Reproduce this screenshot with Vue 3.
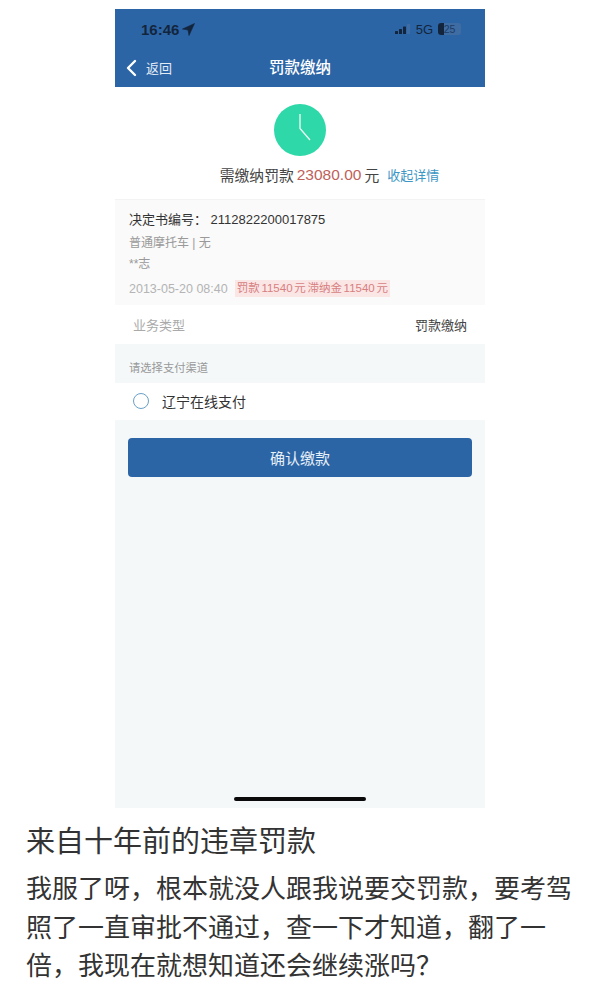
<template>
  <div class="page">
    <div class="phone">
      <div class="topbar">
        <div class="status">
          <div class="time">
            16:46
            <svg class="loc" width="13" height="13" viewBox="0 0 13 13"><path d="M12.5 0.5 L0.5 6 L6 7 L7 12.5 Z" fill="#13253d" stroke="#13253d" stroke-width="0.6" stroke-linejoin="round" /></svg>
          </div>
          <div class="status-right">
            <svg width="16" height="10" viewBox="0 0 16 10">
              <rect x="0" y="7" width="3" height="3" rx="0.5" fill="#13253d" />
              <rect x="4" y="5" width="3" height="5" rx="0.5" fill="#13253d" />
              <rect x="8" y="2.5" width="3" height="7.5" rx="0.5" fill="#13253d" />
              <rect x="12" y="0" width="3" height="10" rx="0.5" fill="#3f6ca3" />
            </svg>
            <span class="net">5G</span>
            <div class="battery"><span class="battery-fill"></span><span class="battery-num">25</span></div>
          </div>
        </div>
        <div class="nav">
          <div class="back">
            <svg width="12" height="18" viewBox="0 0 12 18"><path d="M10 2 L3 9 L10 16" fill="none" stroke="#fff" stroke-width="2.4" stroke-linecap="round" stroke-linejoin="round" /></svg>
            <span>返回</span>
          </div>
          <div class="nav-title">罚款缴纳</div>
        </div>
      </div>

      <div class="hero">
        <svg width="52" height="52" viewBox="0 0 52 52">
          <circle cx="26" cy="26" r="26" fill="#2ed8a8" />
          <path d="M26 10 V24.5 L36 36" fill="none" stroke="#e8f7f2" stroke-width="1.4" />
        </svg>
        <div class="due">
          <span>需缴纳罚款</span>
          <span class="amount">23080.00</span>
          <span>元</span>
          <span class="toggle">收起详情</span>
        </div>
      </div>

      <div class="detail">
        <div class="doc-no">决定书编号： 2112822200017875</div>
        <div class="muted first">普通摩托车 | 无</div>
        <div class="muted">**志</div>
        <div class="meta">
          <span class="date">2013-05-20 08:40</span>
          <span class="fee">罚款 11540 元 滞纳金 11540 元</span>
        </div>
      </div>

      <div class="type-row">
        <span class="type-label">业务类型</span>
        <span class="type-value">罚款缴纳</span>
      </div>

      <div class="pay-label">请选择支付渠道</div>
      <div class="pay-option">
        <span class="radio"></span>
        <span>辽宁在线支付</span>
      </div>

      <div class="footer">
        <div class="confirm">确认缴款</div>
        <div class="home-bar"></div>
      </div>
    </div>

    <div class="post">
      <h1 class="post-title">来自十年前的违章罚款</h1>
      <p class="post-body">我服了呀，根本就没人跟我说要交罚款，要考驾照了一直审批不通过，查一下才知道，翻了一倍，我现在就想知道还会继续涨吗？</p>
    </div>
  </div>
</template>

<script setup>
</script>

<style>
body {
  background: #fff;
}
</style>

<style scoped>
.page {
  width: 600px;
  height: 1001px;
  overflow: hidden;
  padding-top: 9px;
  box-sizing: border-box;
  background: #fff;
  font-family: "Liberation Sans", "Noto Sans CJK SC", sans-serif;
}

.phone {
  width: 370px;
  height: 799px;
  margin: 0 auto;
  display: flex;
  flex-direction: column;
  background: #f4f8f9;
}

.topbar {
  height: 78px;
  background: #2c65a6;
}

.status {
  height: 40px;
  display: flex;
  justify-content: space-between;
  align-items: center;
  padding: 0 24px 0 26px;
}

.time {
  display: flex;
  align-items: center;
  gap: 3px;
  font-size: 15px;
  font-weight: 700;
  color: #13253d;
}

.status-right {
  display: flex;
  align-items: center;
  gap: 5px;
}

.net {
  font-size: 13px;
  color: #13253d;
}

.battery {
  position: relative;
  width: 23px;
  height: 12px;
  border-radius: 3px;
  overflow: hidden;
  background: #3f6ca3;
}

.battery-fill {
  position: absolute;
  left: 0;
  top: 0;
  width: 6px;
  height: 12px;
  background: #13253d;
}

.battery-num {
  position: absolute;
  left: 0;
  right: 0;
  top: 0;
  text-align: center;
  font-size: 10.5px;
  line-height: 12px;
  color: #1c3c66;
}

.nav {
  position: relative;
  height: 38px;
  display: flex;
  align-items: center;
  justify-content: center;
  padding-bottom: 4px;
  box-sizing: border-box;
}

.back {
  position: absolute;
  left: 10px;
  top: 9px;
  display: flex;
  align-items: center;
  gap: 9px;
  font-size: 13px;
  color: #e2ebf5;
}

.nav-title {
  font-size: 15.5px;
  font-weight: 500;
  color: #fff;
}

.hero {
  height: 112px;
  background: #fff;
  display: flex;
  flex-direction: column;
  align-items: center;
  padding-top: 17px;
  box-sizing: border-box;
}

.due {
  display: flex;
  align-items: center;
  gap: 3px;
  margin-top: 8px;
  margin-left: 59px;
  font-size: 14.8px;
  color: #444;
}

.amount {
  font-size: 15.5px;
  color: #c0605a;
}

.toggle {
  margin-left: 5px;
  font-size: 13px;
  color: #3d96c4;
}

.detail {
  height: 106px;
  background: #fafafa;
  padding: 11px 14px 0;
  box-sizing: border-box;
  border-top: 1px solid #f3f3f3;
}

.doc-no {
  font-size: 13px;
  line-height: 18px;
  color: #333;
}

.muted {
  margin-top: 4px;
  font-size: 12px;
  line-height: 17px;
  color: #999;
}

.muted.first {
  margin-top: 6px;
}

.meta {
  display: flex;
  align-items: center;
  gap: 7px;
  margin-top: 7px;
  font-size: 12.5px;
  color: #b4b4b4;
}

.fee {
  padding: 0 2px;
  background: #fbe6e6;
  color: #d77f7f;
  font-size: 11.5px;
  line-height: 17px;
  word-spacing: -1.5px;
}

.type-row {
  height: 39px;
  background: #fff;
  display: flex;
  justify-content: space-between;
  align-items: center;
  padding: 0 18px;
  font-size: 13px;
}

.type-label {
  color: #aaa;
}

.type-value {
  color: #444;
}

.pay-label {
  height: 39px;
  padding: 16px 14px 0;
  box-sizing: border-box;
  font-size: 11.3px;
  line-height: 16px;
  color: #999;
}

.pay-option {
  height: 37px;
  background: #fff;
  display: flex;
  align-items: center;
  gap: 13px;
  padding: 0 0 2px 18px;
  box-sizing: border-box;
  font-size: 14px;
  color: #333;
}

.radio {
  width: 14px;
  height: 14px;
  border: 1.5px solid #6aa0c8;
  border-radius: 50%;
}

.footer {
  flex: 1;
  display: flex;
  flex-direction: column;
  align-items: center;
  padding: 18px 13px 0;
}

.confirm {
  width: 100%;
  height: 39px;
  border-radius: 4px;
  background: #2c65a6;
  color: #e8f0f8;
  font-size: 15px;
  padding-bottom: 1px;
  box-sizing: border-box;
  display: flex;
  align-items: center;
  justify-content: center;
}

.home-bar {
  width: 132px;
  height: 4px;
  margin-top: 320px;
  border-radius: 2px;
  background: #0a0a0a;
}

.post {
  padding: 14px 27px 0;
  color: #333;
}

.post-title {
  margin: 0 0 0 -1px;
  font-size: 29px;
  line-height: 40px;
  font-weight: 400;
}

.post-body {
  margin: 8px 0 0 -1px;
  font-size: 26px;
  line-height: 38.5px;
  color: #333;
}
</style>
